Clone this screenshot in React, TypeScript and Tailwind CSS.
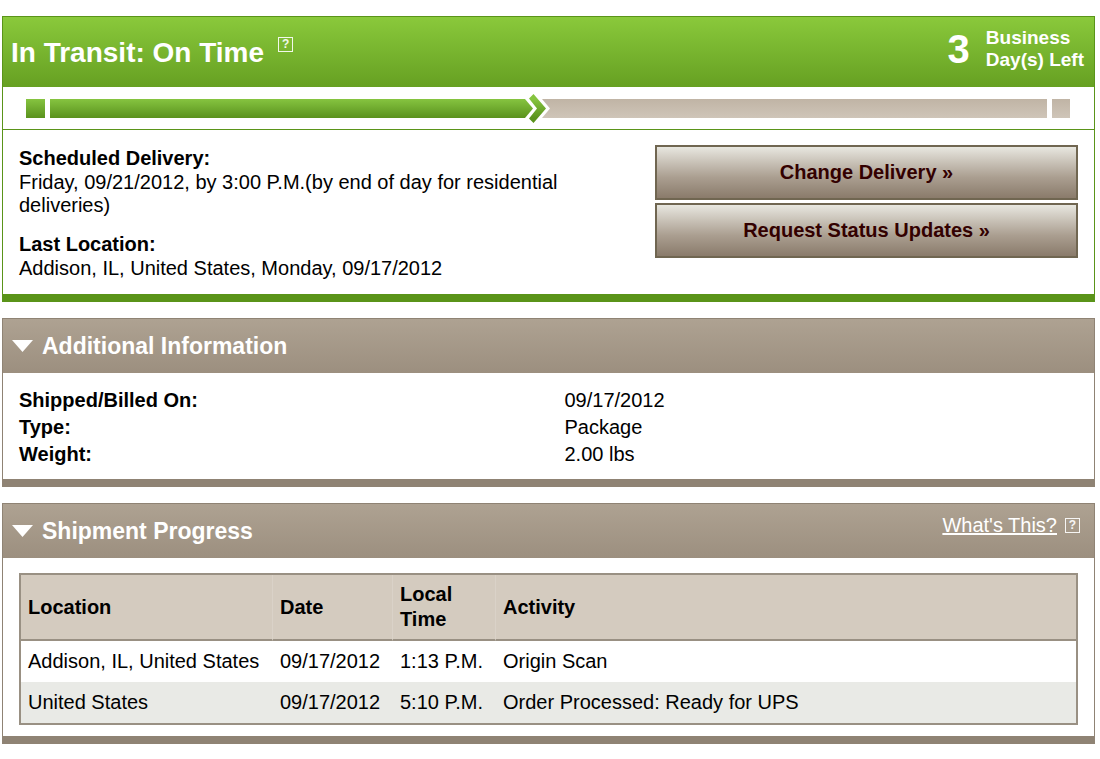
import { ReactNode } from 'react';

interface ScanEvent {
    location: string;
    date: string;
    time: string;
    activity: string;
}

const events: ScanEvent[] = [
    { location: 'Addison, IL, United States', date: '09/17/2012', time: '1:13 P.M.', activity: 'Origin Scan' },
    { location: 'United States', date: '09/17/2012', time: '5:10 P.M.', activity: 'Order Processed: Ready for UPS' },
];

const details = [
    { label: 'Shipped/Billed On:', value: '09/17/2012' },
    { label: 'Type:', value: 'Package' },
    { label: 'Weight:', value: '2.00 lbs' },
];

function HelpButton({ label }: { label: string }) {
    return (
        <button
            type="button"
            aria-label={label}
            className="flex h-[15px] w-[15px] shrink-0 items-center justify-center border border-white/90 text-[12px] leading-[13px] font-bold text-white/90"
        >
            ?
        </button>
    );
}

function ProgressBar({ percent }: { percent: number }) {
    return (
        <div className="flex h-[42px] items-center gap-[5px] pt-px pr-6 pl-[23px]">
            <div className="h-[19px] w-[19px] bg-linear-to-b from-[#86c440] to-[#5a921c]" />
            <div className="flex flex-1 items-center">
                <div
                    className="h-[19px] bg-linear-to-b from-[#86c440] to-[#5a921c]"
                    style={{ width: `${percent}%` }}
                />
                <svg width="30" height="31" viewBox="0 0 30 31" className="shrink-0" aria-hidden="true">
                    <defs>
                        <linearGradient id="done" x1="0" y1="6" x2="0" y2="25" gradientUnits="userSpaceOnUse">
                            <stop offset="0" stopColor="#86c440" />
                            <stop offset="1" stopColor="#5a921c" />
                        </linearGradient>
                        <linearGradient id="left" x1="0" y1="6" x2="0" y2="25" gradientUnits="userSpaceOnUse">
                            <stop offset="0" stopColor="#c0b4a5" />
                            <stop offset="1" stopColor="#cfc5b8" />
                        </linearGradient>
                    </defs>
                    <path d="M0 6h3l8 9.500l-8 9.500H0z" fill="url(#done)" />
                    <path d="M20 6H30V25H20L28 15.500z" fill="url(#left)" />
                    <path d="M7 5.500L11.500 1L24 15.500L11.500 30L7 25.500L15 15.500z" fill="url(#done)" />
                </svg>
                <div className="h-[19px] flex-1 bg-linear-to-b from-[#c0b4a5] to-[#cfc5b8]" />
            </div>
            <div className="h-[19px] w-[18px] bg-linear-to-b from-[#c0b4a5] to-[#cfc5b8]" />
        </div>
    );
}

function ActionButton({ children }: { children: ReactNode }) {
    return (
        <button
            type="button"
            className="h-[55px] w-full border-2 border-[#706651] bg-linear-to-b from-[#e8e7e0] via-[#aa9e90] via-60% to-[#8a7b6b] font-bold text-[#330000]"
        >
            {children}
        </button>
    );
}

function Panel({ title, aside, children }: { title: string; aside?: ReactNode; children: ReactNode }) {
    return (
        <section className="border border-b-8 border-[#8f8374]">
            <header className="flex h-[54px] items-center bg-linear-to-b from-[#aea292] to-[#9c8f7f] pr-[14px] pl-[9px] text-white">
                <button type="button" className="flex items-center gap-[9px]">
                    <svg width="21" height="12" viewBox="0 0 21 12" aria-hidden="true">
                        <path d="M0 0H21L10.500 12z" fill="currentColor" />
                    </svg>
                    <h2 className="text-[23px] leading-7 font-bold">{title}</h2>
                </button>
                {aside}
            </header>
            {children}
        </section>
    );
}

export default function App() {
    return (
        <main className="flex flex-col gap-4 bg-white pt-4 pr-[5px] pl-[2px] font-['Liberation_Sans',Arial,sans-serif] text-[20px] leading-[23px] text-black">
            <section className="border border-b-8 border-[#5a9419]">
                <header className="flex h-[70px] items-center justify-between bg-linear-to-b from-[#8ac93b] to-[#66a022] pt-[2px] pr-[10px] pl-2 text-white">
                    <div className="flex gap-[14px]">
                        <h1 className="text-[28px] leading-8 font-bold">In Transit: On Time</h1>
                        <HelpButton label="About this status" />
                    </div>
                    <div className="flex items-center gap-4 pb-2 font-bold">
                        <span className="text-[40px] leading-[44px]">3</span>
                        <span className="text-[19px] leading-[22px]">
                            Business
                            <br />
                            Day(s) Left
                        </span>
                    </div>
                </header>

                <ProgressBar percent={47.3} />

                <div className="flex items-start gap-6 border-t border-[#5a9419] px-4 pt-[15px] pb-[14px]">
                    <dl className="flex-1">
                        <dt className="leading-[26px] font-bold">Scheduled Delivery:</dt>
                        <dd className="mb-[14px]">
                            Friday, 09/21/2012, by 3:00 P.M.(by end of day for residential deliveries)
                        </dd>
                        <dt className="leading-[26px] font-bold">Last Location:</dt>
                        <dd>Addison, IL, United States, Monday, 09/17/2012</dd>
                    </dl>
                    <div className="flex w-[423px] shrink-0 flex-col gap-[3px]">
                        <ActionButton>Change Delivery »</ActionButton>
                        <ActionButton>Request Status Updates »</ActionButton>
                    </div>
                </div>
            </section>

            <Panel title="Additional Information">
                <dl className="pt-[14px] pb-[11px] leading-[27px]">
                    {details.map((item) => (
                        <div key={item.label} className="grid grid-cols-2">
                            <dt className="pl-4 font-bold">{item.label}</dt>
                            <dd className="pl-4">{item.value}</dd>
                        </div>
                    ))}
                </dl>
            </Panel>

            <Panel
                title="Shipment Progress"
                aside={
                    <div className="mb-3 ml-auto flex items-center gap-2">
                        <a href="#" className="underline">
                            What's This?
                        </a>
                        <HelpButton label="About shipment progress" />
                    </div>
                }
            >
                <div className="px-4 pt-[15px] pb-[11px]">
                    <table className="w-full table-fixed border-separate border-spacing-0 border-2 border-[#999083] text-left">
                        <thead className="bg-[#d4cbbf] leading-[25px]">
                            <tr className="h-[66px]">
                                <th className="w-[252px] border-r border-b-2 border-r-[#dad2c8] border-b-[#999083] px-[7px]">Location</th>
                                <th className="w-[120px] border-r border-b-2 border-r-[#dad2c8] border-b-[#999083] px-[7px]">Date</th>
                                <th className="w-[103px] border-r border-b-2 border-r-[#dad2c8] border-b-[#999083] px-[7px]">Local Time</th>
                                <th className="border-b-2 border-[#999083] px-[7px]">Activity</th>
                            </tr>
                        </thead>
                        <tbody>
                            {events.map((event) => (
                                <tr key={event.activity} className="h-[41px] whitespace-nowrap even:bg-[#e9eae6]">
                                    <td className="px-[7px]">{event.location}</td>
                                    <td className="px-[7px]">{event.date}</td>
                                    <td className="px-[7px]">{event.time}</td>
                                    <td className="px-[7px]">{event.activity}</td>
                                </tr>
                            ))}
                        </tbody>
                    </table>
                </div>
            </Panel>
        </main>
    );
}
